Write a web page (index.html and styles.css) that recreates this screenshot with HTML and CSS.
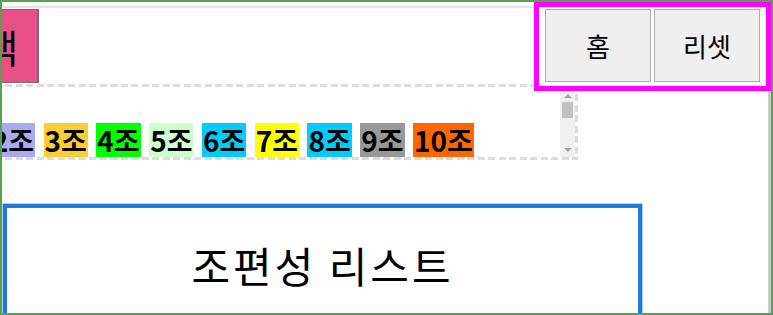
FILE: index.html
```html
<!DOCTYPE html>
<html>
<head>
<meta charset="utf-8">
<link rel="stylesheet" href="styles.css">
</head>
<body>

<div class="frame">
  <div class="page">

    <div class="topBar">
      <div class="topLeft">
        <div class="topRule"></div>
        <button type="button" class="pickButton">선택</button>
      </div>
      <div class="navGroup">
        <button type="button" class="navButton">홈</button>
        <button type="button" class="navButton">리셋</button>
      </div>
    </div>

    <div class="teamBox">
      <div class="teamList">
        <span class="team team1">1조</span>
        <span class="team team2">2조</span>
        <span class="team team3">3조</span>
        <span class="team team4">4조</span>
        <span class="team team5">5조</span>
        <span class="team team6">6조</span>
        <span class="team team7">7조</span>
        <span class="team team8">8조</span>
        <span class="team team9">9조</span>
        <span class="team team10">10조</span>
      </div>
      <div class="scrollBar">
        <span class="arrowUp"></span>
        <span class="scrollThumb"></span>
        <span class="arrowDown"></span>
      </div>
    </div>

    <div class="listBox">
      <h1 class="listTitle">조편성 리스트</h1>
    </div>

  </div>
</div>

</body>
</html>
```

FILE: styles.css
```css
body {
	margin: 0;
	font-family: "Noto Sans CJK KR", "Noto Sans", sans-serif;
}

.frame {
	width: 773px;
	height: 315px;
	box-sizing: border-box;
	border: 2px solid #56a24f;
	overflow: hidden;
	background: #fff;
}

.page {
	height: 100%;
	box-sizing: border-box;
	border-right: 3px solid #c9c9c9;
}

.topBar {
	display: flex;
	align-items: flex-start;
}

.topLeft {
	flex: 1;
	min-width: 0;
}

.topRule {
	height: 2px;
	margin-top: 4px;
	background: #e3e3e3;
}

.pickButton {
	display: block;
	margin: 1px 0 0 -75px;
	width: 112px;
	height: 74px;
	padding: 0;
	background: #e9508a;
	border: 1px solid #7a6a70;
	border-right-width: 2px;
	font-family: inherit;
	font-size: 39px;
	line-height: 1;
	color: #000;
}

.navGroup {
	position: relative;
	z-index: 1;
	display: flex;
	gap: 3px;
	margin-right: -3px;
	padding: 2px 6px 4px 6px;
	border: 5px solid #ff00ff;
	background: #fff;
}

.navButton {
	width: 106px;
	height: 73px;
	padding: 0;
	background: #efefef;
	border: 1px solid #adadad;
	font-family: inherit;
	font-size: 26px;
	color: #000;
}

.teamBox {
	display: flex;
	width: 646px;
	height: 76px;
	box-sizing: border-box;
	margin: -7px 0 0 -70px;
	padding: 3px 3px 3px 0;
	background:
		repeating-linear-gradient(90deg, #dcdcdc 0 7px, transparent 7px 10.5px) top left / 100% 3px no-repeat,
		repeating-linear-gradient(90deg, #dcdcdc 0 7px, transparent 7px 10.5px) bottom left / 100% 3px no-repeat,
		repeating-linear-gradient(180deg, #dcdcdc 0 7px, transparent 7px 10.5px) top right / 3px 100% no-repeat;
}

.teamList {
	flex: 1;
	display: flex;
	align-items: flex-end;
	gap: 8.5px;
	padding-left: 6px;
	overflow: hidden;
}

.team {
	height: 34px;
	padding: 0 1px;
	font-size: 28px;
	font-weight: 700;
	line-height: 34px;
	white-space: nowrap;
	color: #000;
}

.team1 { background: #ff9999; }
.team2 { background: #aaaaf2; }
.team3 { background: #ffcc33; }
.team4 { background: #00ff00; }
.team5 { background: #ccffcc; }
.team6 { background: #00ccff; }
.team7 { background: #ffff00; }
.team8 { background: #00ccff; }
.team9 { background: #999999; }
.team10 { background: #ff6600; }

.scrollBar {
	display: flex;
	flex-direction: column;
	align-items: center;
	width: 15px;
	margin-top: 1px;
	background: #f0f0f0;
}

.arrowUp {
	margin-top: 6px;
	border-left: 4px solid transparent;
	border-right: 4px solid transparent;
	border-bottom: 4px solid #a3a3a3;
}

.scrollThumb {
	width: 11px;
	height: 16px;
	margin-top: 4px;
	background: #c1c1c1;
}

.arrowDown {
	margin-top: auto;
	margin-bottom: 5px;
	border-left: 4px solid transparent;
	border-right: 4px solid transparent;
	border-top: 4px solid #a3a3a3;
}

.listBox {
	width: 639px;
	height: 150px;
	box-sizing: border-box;
	margin: 44px 0 0 1px;
	border: 4px solid #1f78dc;
	box-shadow: 0 0 0 1px #b5d2f3;
}

.listTitle {
	margin: 0;
	padding-top: 32px;
	font-size: 42px;
	font-weight: 400;
	line-height: 50px;
	letter-spacing: 3px;
	text-align: center;
	color: #000;
}
```
